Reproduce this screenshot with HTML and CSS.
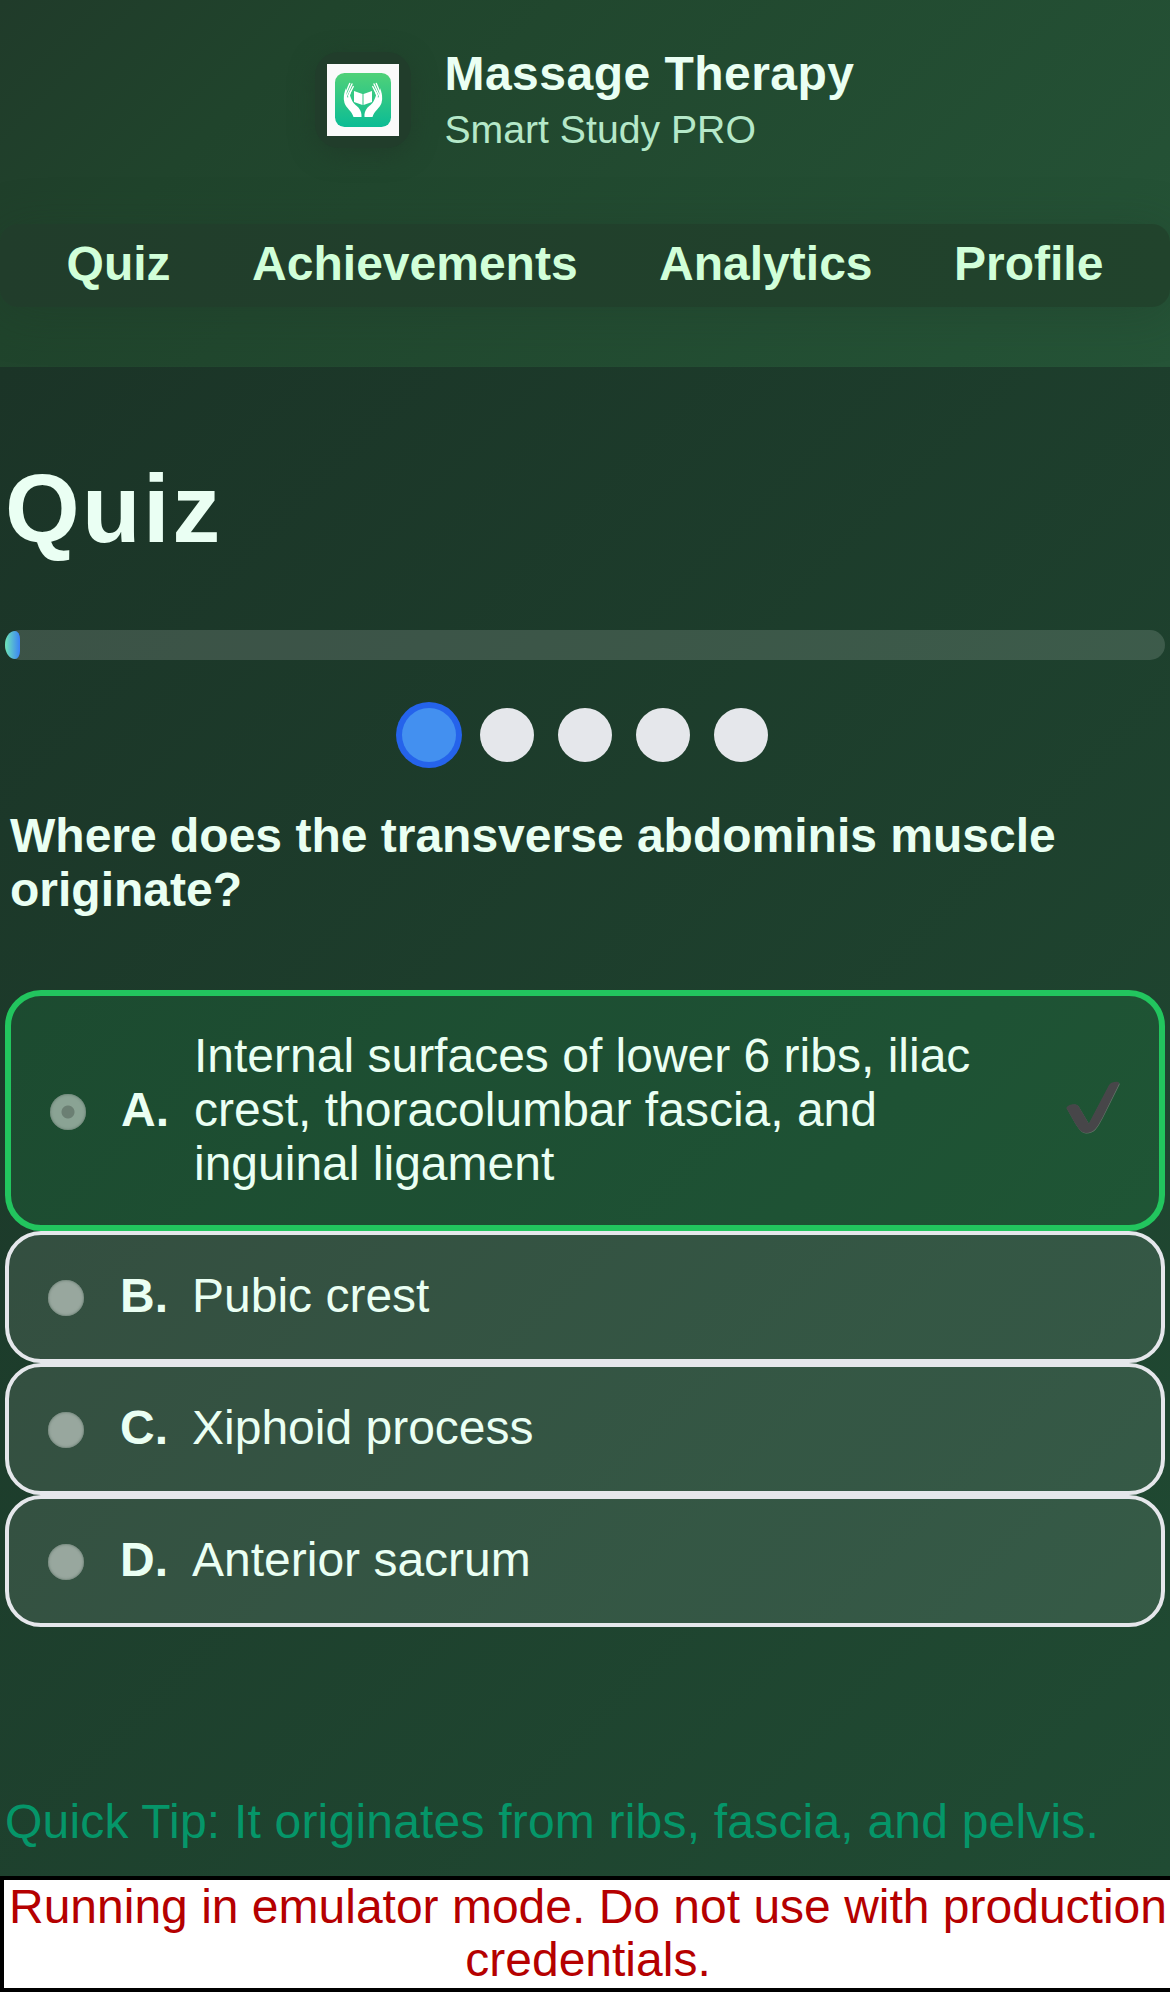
FILE: index.html
```html
<!DOCTYPE html>
<html lang="en">
<head>
<meta charset="utf-8">
<title>Massage Therapy Smart Study PRO</title>
<link rel="stylesheet" href="styles.css">
</head>
<body>
<header class="header">
  <div class="brand">
    <div class="logo">
      <svg width="72" height="72" viewBox="0 0 72 72" aria-hidden="true">
        <defs>
          <linearGradient id="tile" x1="0" y1="0" x2="0" y2="1">
            <stop offset="0" stop-color="#50d178"/>
            <stop offset="1" stop-color="#0bbc95"/>
          </linearGradient>
          <g id="hand">
            <path fill="#fff" d="M19 24C17 29 16 34 17.500 39C19 44 25 47 26.500 53H34.500C35 46 31 43 28.500 41C26 39 24.500 36 23 31.500L25 24.500L22 29L21 34C19.500 32 19 28 19 24Z"/>
            <path fill="none" stroke="#fff" stroke-width="1.400" stroke-linecap="round" d="M18.300 30L22.700 19.500M19.500 32L25 20M21.500 32L26.300 22.500"/>
          </g>
        </defs>
        <rect width="72" height="72" fill="#fafafa"/>
        <rect x="8" y="9" width="56" height="54" rx="9.500" fill="url(#tile)"/>
        <use href="#hand"/>
        <use href="#hand" transform="translate(72 0) scale(-1 1)"/>
        <path fill="#fff" d="M27 27L35.500 30V41L27 38ZM45 27L36.500 30V41L45 38Z"/>
      </svg>
    </div>
    <div class="brand-text">
      <div class="brand-name">Massage Therapy</div>
      <div class="brand-sub">Smart Study PRO</div>
    </div>
  </div>
  <nav class="nav">
    <a>Quiz</a><a>Achievements</a><a>Analytics</a><a>Profile</a>
  </nav>
</header>
<main class="main">
  <h1 class="title">Quiz</h1>
  <div class="progress"><div class="progress-fill"></div></div>
  <div class="dots">
    <span class="dot dot-active"></span><span class="dot"></span><span class="dot"></span><span class="dot"></span><span class="dot"></span>
  </div>
  <h2 class="question">Where does the transverse abdominis muscle originate?</h2>
  <div class="options">
    <div class="option option-correct">
      <span class="radio radio-checked"></span><b class="letter">A.</b>
      <span class="answer">Internal surfaces of lower 6 ribs, iliac crest, thoracolumbar fascia, and inguinal ligament</span>
      <svg class="check" width="54" height="54" viewBox="0 0 54 54" aria-hidden="true">
        <path fill="#66776c" d="M.800 27.300C2.500 23.500 10.500 22.500 12.500 25.300L23 43L43.500 4.500C45.500 1.500 54 0 53.600 3.500L37 36.800C30.500 48.800 28.500 52 20.300 52.500C16 52.500 13.500 49 9 42Z"/>
        <path fill="#474649" d="M.300 27C2 23 10.500 22 12.500 25L22.800 42.500L43 4C45.500 .500 54 -.500 53 3L36.500 36.500C30 48.500 28 51.500 20 52C15.500 52 13 48.500 8.500 41.500Z"/>
      </svg>
    </div>
    <div class="option"><span class="radio"></span><b class="letter">B.</b><span class="answer">Pubic crest</span></div>
    <div class="option"><span class="radio"></span><b class="letter">C.</b><span class="answer">Xiphoid process</span></div>
    <div class="option"><span class="radio"></span><b class="letter">D.</b><span class="answer">Anterior sacrum</span></div>
  </div>
  <p class="tip">Quick Tip: It originates from ribs, fascia, and pelvis.</p>
</main>
<p class="emulator">Running in emulator mode. Do not use with production credentials.</p>
</body>
</html>
```
FILE: styles.css
```css
html {
  height: 1992px;
  overflow: hidden;
}

body {
  margin: 0;
  height: 1992px;
  overflow: hidden;
  display: flex;
  flex-direction: column;
  font: 48px/54px "Liberation Sans", Arial, sans-serif;
  color: #eafff3;
  background: #1c3829;
}

.header {
  box-sizing: border-box;
  height: 367px;
  flex: none;
  padding-top: 47px;
  background: linear-gradient(135deg, #203b2a 0%, #20442c 22%, #255437 100%);
}

.brand {
  display: flex;
  justify-content: center;
  gap: 33px;
  height: 108px;
}

.logo {
  box-sizing: border-box;
  width: 96px;
  height: 96px;
  margin-top: 5px;
  padding: 12px;
  border-radius: 24px;
  background: #213d2b;
  box-shadow: 0 6px 24px rgba(31, 56, 40, 0.6);
}

.logo svg {
  display: block;
}

.brand-name {
  font-weight: 700;
  letter-spacing: 0.01em;
}

.brand-sub {
  padding-top: 2px;
  font-size: 39.2px;
  color: #b5e8c9;
}

.nav {
  box-sizing: border-box;
  display: flex;
  justify-content: center;
  gap: 81.5px;
  height: 83px;
  margin-top: 69px;
  padding-top: 13px;
  border-radius: 18px;
  background: linear-gradient(90deg, #213d2b, #21432c);
  box-shadow: 0 6px 48px rgba(31, 56, 40, 0.35);
  color: #d1ffd9;
  font-weight: 700;
}

.main {
  flex: 1;
  padding: 0 5px;
  background: linear-gradient(135deg, #1b3427 0%, #204b33 100%);
}

.title {
  margin: 0;
  padding-top: 88px;
  font-size: 96px;
  line-height: 108px;
  letter-spacing: 0.025em;
}

.progress {
  box-sizing: border-box;
  height: 30px;
  margin-top: 67px;
  padding: 1px 0;
  border-radius: 15px;
  background: rgba(255, 255, 255, 0.14);
}

.progress-fill {
  width: 15px;
  height: 28px;
  border-radius: 10px 5px 5px 10px / 14px 8px 8px 14px;
  background: linear-gradient(90deg, #6ee7b7, #3b82f6);
}

.dots {
  display: flex;
  justify-content: center;
  gap: 24px;
  margin-top: 48px;
}

.dot {
  width: 54px;
  height: 54px;
  border-radius: 50%;
  background: #e5e7eb;
}

.dot-active {
  background: #4390f0;
  box-shadow: 0 0 0 6px #2563eb;
}

.question {
  margin: 47px 5px 0;
  font-size: 48px;
}

.options {
  margin-top: 73px;
}

.option {
  box-sizing: border-box;
  display: flex;
  align-items: center;
  height: 132px;
  padding: 0 39px 3px;
  border: 4px solid #e5e7eb;
  border-radius: 36px;
  background: rgba(255, 255, 255, 0.1);
}

.option-correct {
  height: 241px;
  padding-bottom: 2px;
  border: 6px solid #22c55e;
  background: rgba(34, 197, 94, 0.13);
}

.radio {
  flex: none;
  width: 36px;
  height: 36px;
  margin: 5px 36px 0 0;
  border-radius: 50%;
  background: #98a79e;
  box-shadow: inset 0 0 2px 1px rgba(90, 112, 99, 0.5);
}

.radio-checked {
  margin-top: 4px;
  background: radial-gradient(circle, #6b7f73 6px, #8aa394 7px);
}

.letter {
  margin-right: 24px;
}

.option-correct .letter {
  margin-left: -1px;
  margin-right: 25px;
}

.answer {
  max-width: 840px;
}

.check {
  margin: -3px 0 0 auto;
}

.tip {
  margin: 168px 0 0;
  letter-spacing: 0.2px;
  color: #059669;
}

.emulator {
  box-sizing: border-box;
  width: 1176px;
  height: 116px;
  flex: none;
  margin: 0;
  border: 4px solid #000;
  background: #fff;
  color: #b50000;
  line-height: 53px;
  text-align: center;
}
```
